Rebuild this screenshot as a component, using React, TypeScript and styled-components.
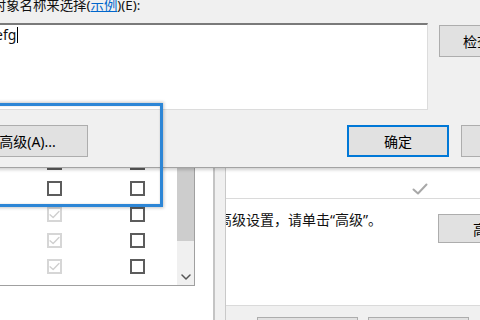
import styled, { createGlobalStyle } from "styled-components";

const GlobalStyle = createGlobalStyle`
html, body {
  margin: 0;
  padding: 0;
  background: #f0f0f0;
}
`;

type BoxState = "off" | "dim";

const rows: [BoxState, BoxState][] = [
    ["off", "off"],
    ["off", "off"],
    ["dim", "off"],
    ["dim", "off"],
    ["dim", "off"],
    ["off", "off"],
];

const TickIcon = ({ color, w = 11, h = 9 }: { color: string; w?: number; h?: number }) => (
    <svg width={w} height={h} viewBox="0 0 16 12" fill="none">
        <path d="M1.5 6.5 L6 10.5 L14.5 1.5" stroke={color} strokeWidth="2" strokeLinecap="round" strokeLinejoin="round" />
    </svg>
);

const ChevronDown = () => (
    <svg width="10" height="6" viewBox="0 0 10 6" fill="none">
        <path d="M1 1 L5 5 L9 1" stroke="#555" strokeWidth="1.5" strokeLinecap="round" strokeLinejoin="round" />
    </svg>
);

export default function App() {
    return (
        <>
            <GlobalStyle />
            <Screen>
                <Dialog>
                    <PromptLabel>
                        输入对象名称来选择(<SampleLink>示例</SampleLink>)(E):
                    </PromptLabel>
                    <InputRow>
                        <NameBox>
                            <Typed>efg</Typed>
                            <Caret />
                        </NameBox>
                        <SideButton $height={32} $pad={23}>检查名称(C)</SideButton>
                    </InputRow>
                    <ButtonRow>
                        <DialogButton $width={121} $shift={-23}>高级(A)...</DialogButton>
                        <DialogButton $width={102} $primary $push>确定</DialogButton>
                        <DialogButton $width={102}>取消</DialogButton>
                    </ButtonRow>
                </Dialog>

                <BackWindow>
                    <ListPane>
                        <ListBox>
                            <Rows>
                                {rows.map((r, i) => (
                                    <Row key={i}>
                                        {r.map((state, j) => (
                                            <CheckBox key={j} $state={state}>
                                                {state === "dim" && <TickIcon color="#cfcfcf" />}
                                            </CheckBox>
                                        ))}
                                    </Row>
                                ))}
                            </Rows>
                            <Scrollbar>
                                <Thumb />
                                <Track />
                                <ArrowCell>
                                    <ChevronDown />
                                </ArrowCell>
                            </Scrollbar>
                        </ListBox>
                    </ListPane>

                    <Splitter />

                    <DetailPane>
                        <DetailTop>
                            <TickIcon color="#a8a8a8" w={16} h={12} />
                        </DetailTop>
                        <HintRow>
                            <HintText>高级设置，请单击“高级”。</HintText>
                            <SideButton $height={29} $pad={34}>高级(D)...</SideButton>
                        </HintRow>
                        <Footer>
                            <FooterButton />
                            <FooterButton />
                        </Footer>
                    </DetailPane>
                </BackWindow>

                <Annotation />
            </Screen>
        </>
    );
}

const Screen = styled.div`
position: relative;
width: 480px;
height: 320px;
overflow: hidden;
display: flex;
flex-direction: column;
background: #f0f0f0;
color: #000;
font-family: "Noto Sans", "Noto Sans CJK SC", sans-serif;
`;

const Dialog = styled.section`
position: relative;
z-index: 1;
flex: 0 0 168px;
box-sizing: border-box;
width: 614px;
margin-left: -40px;
padding: 0 11px 0 30px;
display: flex;
flex-direction: column;
background: #f0f0f0;
border-bottom: 1px solid #a3a3a3;
box-shadow: 0 2px 3px rgba(0, 0, 0, 0.18);
`;

const PromptLabel = styled.div`
margin: -1px 0 0 -24px;
font-size: 13.4px;
line-height: 13px;
white-space: nowrap;
color: #111;
`;

const SampleLink = styled.span`
color: #0066cc;
text-decoration: underline;
`;

const InputRow = styled.div`
margin-top: 11px;
display: flex;
align-items: flex-start;
gap: 11px;
`;

const NameBox = styled.div`
flex: 0 0 438px;
height: 87px;
box-sizing: border-box;
padding: 2px 0 0 3px;
display: flex;
align-items: flex-start;
background: #fff;
border-top: 2px solid #7a7a7a;
border-left: 2px solid #7a7a7a;
border-right: 1px solid #dcdcdc;
border-bottom: 1px solid #dcdcdc;
`;

const Typed = styled.span`
font-size: 14px;
line-height: 16px;
color: #111;
`;

const Caret = styled.span`
width: 1px;
height: 16px;
margin-left: 1px;
background: #000;
`;

const SideButton = styled.button<{ $height: number; $pad: number }>`
flex-shrink: 0;
height: ${p => p.$height}px;
margin-top: 2px;
padding: 0 ${p => p.$pad}px;
box-sizing: border-box;
border: 1px solid #adadad;
border-radius: 0;
background: #e1e1e1;
font-family: inherit;
font-size: 14px;
color: #000;
white-space: nowrap;
display: flex;
align-items: center;
`;

const ButtonRow = styled.div`
margin-top: 15px;
display: flex;
gap: 12px;
`;

const DialogButton = styled.button<{ $width: number; $primary?: boolean; $push?: boolean; $shift?: number }>`
flex: 0 0 ${p => p.$width}px;
height: 32px;
margin-left: ${p => (p.$push ? "auto" : `${p.$shift || 0}px`)};
padding: 0;
box-sizing: border-box;
border: ${p => (p.$primary ? "2px solid #0078d7" : "1px solid #adadad")};
border-radius: 0;
background: #e1e1e1;
font-family: inherit;
font-size: 14px;
color: #000;
display: flex;
align-items: center;
justify-content: center;
white-space: nowrap;
`;

const BackWindow = styled.div`
flex: 1;
min-height: 0;
display: flex;
background: #fff;
`;

const ListPane = styled.div`
flex: 0 0 213px;
display: flex;
flex-direction: column;
background: #fff;
`;

const ListBox = styled.div`
width: 195px;
height: 118px;
box-sizing: border-box;
display: flex;
overflow: hidden;
background: #fff;
border-right: 1px solid #a0a0a0;
border-bottom: 1px solid #a0a0a0;
`;

const Rows = styled.div`
flex: 1;
margin-top: -19px;
display: flex;
flex-direction: column;
`;

const Row = styled.div`
flex: 0 0 26px;
display: flex;
align-items: center;
gap: 68px;
padding-left: 47px;
`;

const CheckBox = styled.span<{ $state: BoxState }>`
width: 15px;
height: 15px;
box-sizing: border-box;
display: flex;
align-items: center;
justify-content: center;
background: #fff;
border: 2px solid ${p => (p.$state === "dim" ? "#d6d6d6" : "#5c5c5c")};
`;

const Scrollbar = styled.div`
flex: 0 0 17px;
display: flex;
flex-direction: column;
background: #f0f0f0;
`;

const Thumb = styled.div`
height: 73px;
background: #cdcdcd;
`;

const Track = styled.div`
flex: 1;
`;

const ArrowCell = styled.div`
height: 17px;
display: flex;
align-items: center;
justify-content: center;
`;

const Splitter = styled.div`
flex: 0 0 13px;
box-sizing: border-box;
background: #f0f0f0;
border-left: 2px solid #c4c4c4;
border-right: 1px solid #c9c9c9;
`;

const DetailPane = styled.div`
flex: 0 0 300px;
display: flex;
flex-direction: column;
overflow: hidden;
background: #fff;
`;

const DetailTop = styled.div`
height: 31px;
box-sizing: border-box;
padding: 15px 0 0 186px;
display: flex;
align-items: flex-start;
border-bottom: 1px solid #dadada;
`;

const HintRow = styled.div`
padding-top: 13px;
display: flex;
align-items: flex-start;
`;

const HintText = styled.p`
flex: 0 0 220px;
margin: 0 0 0 -8px;
font-size: 14px;
line-height: 16px;
white-space: nowrap;
color: #111;
`;

const Footer = styled.div`
margin-top: auto;
height: 15px;
box-sizing: border-box;
padding: 11px 0 0 31px;
display: flex;
gap: 10px;
background: #f0f0f0;
border-top: 1px solid #dadada;
`;

const FooterButton = styled.div`
flex: 0 0 101px;
height: 30px;
box-sizing: border-box;
border: 1px solid #adadad;
background: #e1e1e1;
`;

const Annotation = styled.div`
position: absolute;
left: -10px;
top: 103px;
width: 173px;
height: 104px;
box-sizing: border-box;
z-index: 2;
pointer-events: none;
border: 3px solid #2d86d6;
box-shadow: 0 0 3px 1px rgba(0, 0, 0, 0.22), inset 0 0 2px rgba(0, 0, 0, 0.18);
`;
